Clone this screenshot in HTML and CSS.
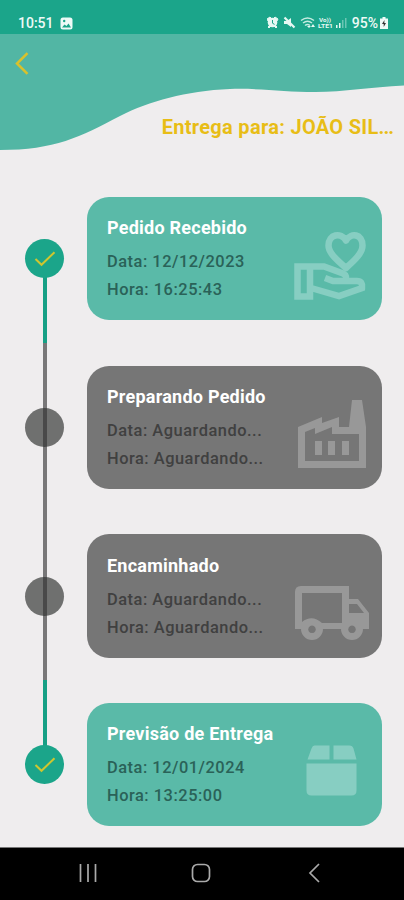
FILE: index.html
```
<!DOCTYPE html>
<html lang="pt-BR">
<head>
<meta charset="utf-8">
<meta name="viewport" content="width=device-width, initial-scale=1">
<title>Entrega</title>
<link rel="stylesheet" href="styles.css">
</head>
<body>
<div class="status">
  <span class="clock">10:51</span>
  <svg class="photo" width="13" height="13" viewBox="0 0 13 13"><rect x=".5" y=".5" width="12" height="12" rx="2.5" fill="#eefaf7"/><path d="M2 10.500l2.500-3 2 1.500 2-2.500 2.500 4z" fill="#1ba58a"/><circle cx="4.200" cy="4" r="1.200" fill="#1ba58a"/></svg>
  <div class="signals">
    <svg width="82" height="14" viewBox="0 0 82 14" fill="#e6f8f3">
      <circle cx="5.500" cy="6.500" r="4.800"/><path d="M0 3l3-2 1 1-3 3zM11 3L8 1 7 2l3 3zM1 11l2-2 1 1-2 2zM10 11L8 9l-1 1 2 2z" stroke="#e6f8f3"/>
      <path d="M5.500 4v3.200l2 1.200" fill="none" stroke="#1ba58a"/>
      <path d="M17 5h3l4-3v9l-4-3h-3z"/><path d="M17.500 1.500l10 10" stroke="#e6f8f3" stroke-width="2.200"/>
      <g fill="none" stroke="#c4ebe0" stroke-width="1.500"><path d="M34 4.500q6.500-5 13 0M36 7q4.500-3.500 9 0M38 9.500q2.500-2 5 0"/></g>
      <path d="M40 10l2 2 2-2zM46 8l2 3h-4z"/>
      <text class="volte" x="52" y="5.800" textLength="12" lengthAdjust="spacingAndGlyphs">Vo))</text><text class="volte" x="51" y="12.200" textLength="15" lengthAdjust="spacingAndGlyphs">LTE1</text>
      <path d="M69 9h1.500v3H69zM72 7h1.500v5H72z"/><path d="M75 4h1.500v8H75zM78 2h1.500v10H78z" opacity=".4"/>
    </svg>
    <span class="percent">95%</span>
    <svg class="battery" width="8" height="12" viewBox="0 0 8 12"><path d="M2.500 0h3v1.500H8V12H0V1.500h2.500z" fill="#eefaf7"/><path d="M4.500 3L2 7h1.700v3L6 6H4.300z" fill="#333"/></svg>
  </div>
</div>
<header class="hero">
  <svg class="wave" viewBox="0 0 404 117" width="404" height="117"><path d="M0 0H404V51.500C370 53 345 58 315 58C285 58 260 54 230 55C185 57 150 67 120 82C80 103 55 116 0 116Z" fill="#52b6a4"/></svg>
  <svg class="back" width="14" height="23" viewBox="0 0 14 23"><path d="M12.500 1.200L2 11.500L12.500 21.800" fill="none" stroke="#d9c12b" stroke-width="2.500"/></svg>
  <h1 class="title">Entrega para: JOÃO SIL<span class="dots">...</span></h1>
</header>
<main class="timeline">
  <section class="step done first">
    <div class="rail"><div class="dot"><svg width="22" height="16" viewBox="0 0 22 16"><path d="M1.500 8L7.500 13.800L20.500 1.200"/></svg></div></div>
    <article class="card"><div class="info"><h2>Pedido Recebido</h2><p>Data: 12/12/2023</p><p>Hora: 16:25:43</p></div>
      <svg class="icon" width="80" height="80" viewBox="0 0 80 80"><g fill="none" stroke-width="6.500"><path stroke-linejoin="round" d="M53 43C44 35 35.500 28 35.500 20.500C35.500 9 48 7 53 15.500C58 7 69.500 9 69.500 20.500C69.500 28 62 35 53 43Z"/><path d="M4.500 41.500H17V71.500H4.500ZM17 41.500H31L50 48.500Q55 51 52 56H40L32 53M51 56H64Q70 56 69 63L46 71L18 63"/></g></svg></article>
  </section>
  <section class="step">
    <div class="rail"><div class="dot"></div></div>
    <article class="card"><div class="info"><h2>Preparando Pedido</h2><p>Data: Aguardando...</p><p>Hora: Aguardando...</p></div>
      <svg class="icon" width="80" height="80" viewBox="-1 0 80 80"><path fill-rule="evenodd" stroke="none" d="M4 74V33L28 23V29L45 23V33H55L58 6H68L72 33V74ZM11 67H65V40H38V33L21 40V34L11 38ZM21 47h7v14h-7zM34 47h7v14h-7zM48 47h7v14h-7z"/></svg></article>
  </section>
  <section class="step">
    <div class="rail"><div class="dot"></div></div>
    <article class="card"><div class="info"><h2>Encaminhado</h2><p>Data: Aguardando...</p><p>Hora: Aguardando...</p></div>
      <svg class="icon" width="80" height="80" viewBox="-1 0 80 80"><path fill-rule="evenodd" stroke="none" d="M7 24H55V37H64L75 51V67H69A11 11 0 0 1 47 67H29A11 11 0 0 1 7 67H1V30Q1 24 7 24ZM8 31V60Q18 52 28 61H48V31ZM55 42V51H70L63 42ZM18 63.500a3.800 3.800 0 1 0 .01 0M58 63.500a3.800 3.800 0 1 0 .01 0"/></svg></article>
  </section>
  <section class="step done last">
    <div class="rail"><div class="dot"><svg width="22" height="16" viewBox="0 0 22 16"><path d="M1.500 8L7.500 13.800L20.500 1.200"/></svg></div></div>
    <article class="card"><div class="info"><h2>Previsão de Entrega</h2><p>Data: 12/01/2024</p><p>Hora: 13:25:00</p></div>
      <svg class="icon" width="80" height="80" viewBox="-1.500 -1.500 80 80"><path stroke="none" d="M20 13H35V27H13L17 16Q18 13 20 13ZM39 13H55Q58 13 59 16L62 27H39ZM12 31H62V58Q62 63 57 63H17Q12 63 12 58Z"/></svg></article>
  </section>
</main>
<nav class="navbar">
  <svg width="18" height="18" viewBox="0 0 18 18"><path d="M1.500 0V18M9 0V18M16.500 0V18"/></svg>
  <svg class="home" width="20" height="20" viewBox="0 0 20 20"><rect x="1.500" y="1.500" width="17" height="17" rx="5"/></svg>
  <svg class="prev" width="12" height="20" viewBox="0 0 12 20"><path d="M11 1L2 10L11 19"/></svg>
</nav>
</body>
</html>
```
FILE: styles.css
```
* { box-sizing: border-box; margin: 0; }
body { width: 404px; height: 900px; overflow: hidden; background: #efedee; font-family: Roboto, sans-serif; display: flex; flex-direction: column; }
svg { display: block; flex: none; }
.status { height: 34px; flex: none; background: #1ba58a; color: #eefaf7; display: flex; align-items: center; padding: 12px 16px 0 18px; font-size: 14px; }
.clock { font-weight: 500; }
.photo { margin-left: 6px; }
.signals { margin-left: auto; display: flex; align-items: center; }
.percent { margin-left: 3px; font-weight: 500; }
.battery { margin-left: 2px; }
.volte { font-size: 5px; font-weight: 700; }
.hero { height: 140.300px; flex: none; display: grid; grid-template-rows: 80px 60px; }
.wave { grid-area: 1 / 1 / 3 / 2; }
.back { grid-area: 1 / 1; margin: 18px 0 0 15px; }
.title { grid-area: 2 / 1; justify-self: end; margin-right: 11px; font-size: 20px; line-height: 26px; font-weight: 700; color: #e8bd16; white-space: nowrap; letter-spacing: .3px; }
.dots { letter-spacing: -1px; }
.timeline { height: 672.700px; flex: none; overflow: hidden; }
.step { height: 168.700px; display: grid; grid-template-columns: 87px 295px; }
.rail { position: relative; display: grid; place-items: center; padding-left: 2px; }
.rail::after { content: ""; position: absolute; left: 42.500px; top: 0; bottom: 0; width: 4px; background: rgba(50,50,50,.63); }
.done .rail::after { background: #16a085; }
.first .rail::after { top: 50%; bottom: 0; }
.last .rail::after { bottom: 50%; }
.dot { width: 39px; height: 39px; border-radius: 50%; background: #6f706f; display: grid; place-items: center; }
.done .dot { background: #1ba58a; position: relative; z-index: 1; }
.dot path { fill: none; stroke: #cfc62f; stroke-width: 2; }
.card { align-self: center; height: 123.500px; border-radius: 22px; background: #767676; display: flex; justify-content: space-between; padding-left: 20px; padding-right: 9px; }
.done .card { background: #5abaa8; }
.info { padding-top: 18.300px; width: 180px; white-space: nowrap; }
.card h2 { font-size: 18px; line-height: 26px; font-weight: 700; letter-spacing: .24px; color: #fff; }
.card p { font-size: 16.400px; line-height: 28px; font-weight: 500; letter-spacing: .52px; color: #404040; }
.card p:first-of-type { margin-top: 7px; }
.done .card p { color: #2a6258; }
.icon { margin-top: 28px; fill: #989898; stroke: #989898; }
.done .icon { fill: #87cec2; stroke: #87cec2; }
.navbar { height: 53px; flex: none; background: #000; border-top: 1px solid #777; display: flex; align-items: center; padding: 0 0 2px 79px; }
.home { margin-left: 94px; }
.prev { margin-left: 97px; }
.navbar svg { fill: none; stroke: #aaa; stroke-width: 1.700; }
```
